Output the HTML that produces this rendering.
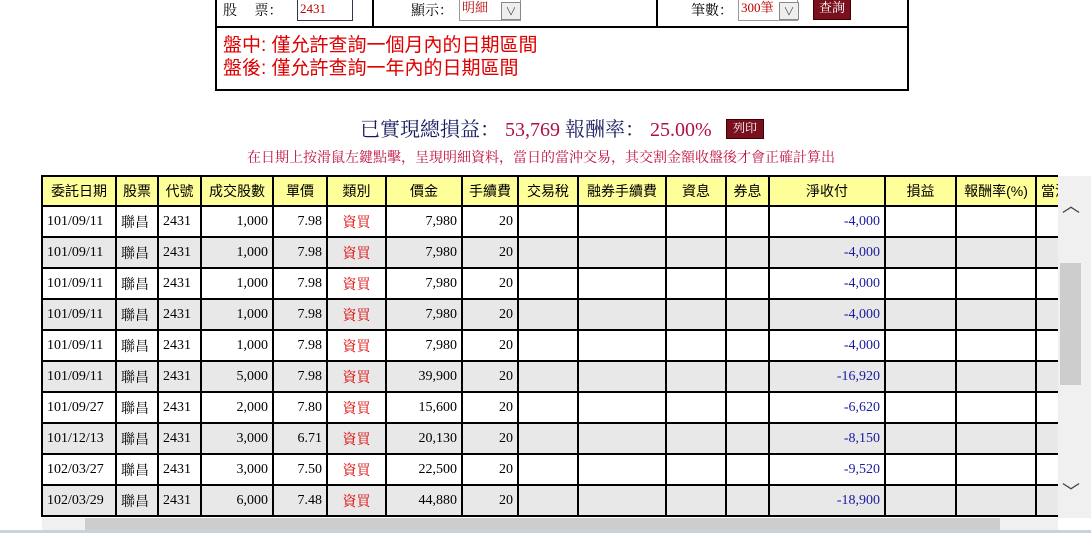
<!DOCTYPE html>
<html><head><meta charset="utf-8"><style>
body{margin:0;width:1091px;height:533px;background:#fff;position:relative;overflow:hidden;font-family:"Liberation Serif","Noto Serif CJK SC","Noto Sans CJK TC",serif;}
.abs{position:absolute}
.top{left:215px;top:-4px;width:690px;height:91px;border:2px solid #000;}
.t{font-size:14px;color:#000}
.red{color:#d00}
table{border-collapse:collapse;table-layout:fixed;font-size:14px}
td{border:2px solid #000;height:29px;padding:0 4px;white-space:nowrap;overflow:hidden}
tr.h td{background:#ffff99;text-align:center;height:28px;font-family:"Liberation Sans","Noto Sans CJK TC",sans-serif}
tr.g td{background:#e8e8e8}
.r{text-align:right}.c{text-align:center}
.b{color:#1a1aa0}
.btn{background:#7a0f1e;color:#fff;font-size:12px;border:1px solid #400}
</style></head><body>
<div class="abs top">
 <div class="abs" style="left:0;top:28px;width:690px;height:2px;background:#000"></div>
 <div class="abs" style="left:155px;top:0;width:2px;height:28px;background:#000"></div>
 <div class="abs" style="left:439px;top:0;width:2px;height:28px;background:#000"></div>
 <div class="abs t" style="left:6px;top:2px">股&nbsp;&nbsp;&nbsp;&nbsp;&nbsp;票：</div>
 <div class="abs" style="left:80px;top:1px;width:52px;height:20px;border:1px solid #335;font-size:13px;color:#b00;line-height:18px;padding-left:2px">2431</div>
 <div class="abs t" style="left:194px;top:2px">顯示：</div>
 <div class="abs" style="left:242px;top:1px;width:58px;height:20px;border:1px solid #999;font-size:13px;color:#b00;line-height:16px;padding-left:2px">明細</div>
 <div class="abs" style="left:284px;top:4px;width:18px;height:16px;border:1px solid #888;background:#eee;font-size:11px;text-align:center">∨</div>
 <div class="abs t" style="left:474px;top:2px">筆數：</div>
 <div class="abs" style="left:521px;top:1px;width:56px;height:20px;border:1px solid #999;font-size:13px;color:#b00;line-height:16px;padding-left:2px">300筆</div>
 <div class="abs" style="left:562px;top:4px;width:18px;height:16px;border:1px solid #888;background:#eee;font-size:11px;text-align:center">∨</div>
 <div class="abs btn" style="left:596px;top:0;width:36px;height:20px;text-align:center;line-height:18px;font-size:13px">查詢</div>
 <div class="abs red" style="left:6px;top:36px;font-size:19px;line-height:23px;font-family:'Liberation Sans','Noto Sans CJK TC',sans-serif">盤中: 僅允許查詢一個月內的日期區間<br>盤後: 僅允許查詢一年內的日期區間</div>
</div>
<div class="abs" style="left:360px;top:113px;font-size:20px;color:#1a1a60;white-space:nowrap">已實現總損益： <span style="color:#b01040">53,769</span> 報酬率： <span style="color:#b01040">25.00%</span></div>
<div class="abs btn" style="left:726px;top:119px;width:36px;height:18px;text-align:center;line-height:17px">列印</div>
<div class="abs" style="left:247px;top:147px;font-size:14px;color:#c01040;white-space:nowrap">在日期上按滑鼠左鍵點擊，呈現明細資料，當日的當沖交易，其交割金額收盤後才會正確計算出</div>
<div class="abs" style="left:41px;top:175px;width:1017px;height:343px;overflow:hidden">
<table style="width:1050px">
<colgroup><col style="width:74px"><col style="width:42px"><col style="width:43px"><col style="width:72px"><col style="width:54px"><col style="width:59px"><col style="width:76px"><col style="width:56px"><col style="width:60px"><col style="width:88px"><col style="width:60px"><col style="width:43px"><col style="width:116px"><col style="width:71px"><col style="width:80px"><col style="width:56px"></colgroup>
<tr class="h"><td>委託日期</td><td>股票</td><td>代號</td><td>成交股數</td><td>單價</td><td>類別</td><td>價金</td><td>手續費</td><td>交易稅</td><td>融券手續費</td><td>資息</td><td>券息</td><td>淨收付</td><td>損益</td><td>報酬率(%)</td><td style="text-align:left">當沖</td></tr>
<tr><td>101/09/11</td><td>聯昌</td><td>2431</td><td class="r">1,000</td><td class="r">7.98</td><td class="c red">資買</td><td class="r">7,980</td><td class="r">20</td><td></td><td></td><td></td><td></td><td class="r b">-4,000</td><td></td><td></td><td></td></tr>
<tr class="g"><td>101/09/11</td><td>聯昌</td><td>2431</td><td class="r">1,000</td><td class="r">7.98</td><td class="c red">資買</td><td class="r">7,980</td><td class="r">20</td><td></td><td></td><td></td><td></td><td class="r b">-4,000</td><td></td><td></td><td></td></tr>
<tr><td>101/09/11</td><td>聯昌</td><td>2431</td><td class="r">1,000</td><td class="r">7.98</td><td class="c red">資買</td><td class="r">7,980</td><td class="r">20</td><td></td><td></td><td></td><td></td><td class="r b">-4,000</td><td></td><td></td><td></td></tr>
<tr class="g"><td>101/09/11</td><td>聯昌</td><td>2431</td><td class="r">1,000</td><td class="r">7.98</td><td class="c red">資買</td><td class="r">7,980</td><td class="r">20</td><td></td><td></td><td></td><td></td><td class="r b">-4,000</td><td></td><td></td><td></td></tr>
<tr><td>101/09/11</td><td>聯昌</td><td>2431</td><td class="r">1,000</td><td class="r">7.98</td><td class="c red">資買</td><td class="r">7,980</td><td class="r">20</td><td></td><td></td><td></td><td></td><td class="r b">-4,000</td><td></td><td></td><td></td></tr>
<tr class="g"><td>101/09/11</td><td>聯昌</td><td>2431</td><td class="r">5,000</td><td class="r">7.98</td><td class="c red">資買</td><td class="r">39,900</td><td class="r">20</td><td></td><td></td><td></td><td></td><td class="r b">-16,920</td><td></td><td></td><td></td></tr>
<tr><td>101/09/27</td><td>聯昌</td><td>2431</td><td class="r">2,000</td><td class="r">7.80</td><td class="c red">資買</td><td class="r">15,600</td><td class="r">20</td><td></td><td></td><td></td><td></td><td class="r b">-6,620</td><td></td><td></td><td></td></tr>
<tr class="g"><td>101/12/13</td><td>聯昌</td><td>2431</td><td class="r">3,000</td><td class="r">6.71</td><td class="c red">資買</td><td class="r">20,130</td><td class="r">20</td><td></td><td></td><td></td><td></td><td class="r b">-8,150</td><td></td><td></td><td></td></tr>
<tr><td>102/03/27</td><td>聯昌</td><td>2431</td><td class="r">3,000</td><td class="r">7.50</td><td class="c red">資買</td><td class="r">22,500</td><td class="r">20</td><td></td><td></td><td></td><td></td><td class="r b">-9,520</td><td></td><td></td><td></td></tr>
<tr class="g"><td>102/03/29</td><td>聯昌</td><td>2431</td><td class="r">6,000</td><td class="r">7.48</td><td class="c red">資買</td><td class="r">44,880</td><td class="r">20</td><td></td><td></td><td></td><td></td><td class="r b">-18,900</td><td></td><td></td><td></td></tr>
</table></div>
<div class="abs" style="left:1058px;top:176px;width:33px;height:342px;background:#f0f0f0"></div>
<div class="abs" style="left:1060px;top:263px;width:21px;height:122px;background:#cdcdcd"></div>
<div class="abs" style="left:1062px;top:192px;font-size:18px;color:#444;font-family:'DejaVu Sans',sans-serif">︿</div>
<div class="abs" style="left:1062px;top:478px;font-size:18px;color:#444;font-family:'DejaVu Sans',sans-serif">﹀</div>
<div class="abs" style="left:42px;top:518px;width:1016px;height:12px;background:#f0f0f0"></div>
<div class="abs" style="left:85px;top:518px;width:915px;height:12px;background:#cdcdcd"></div>
<div class="abs" style="left:0;top:530px;width:1091px;height:3px;background:#c9d3e0"></div>
</body></html>
